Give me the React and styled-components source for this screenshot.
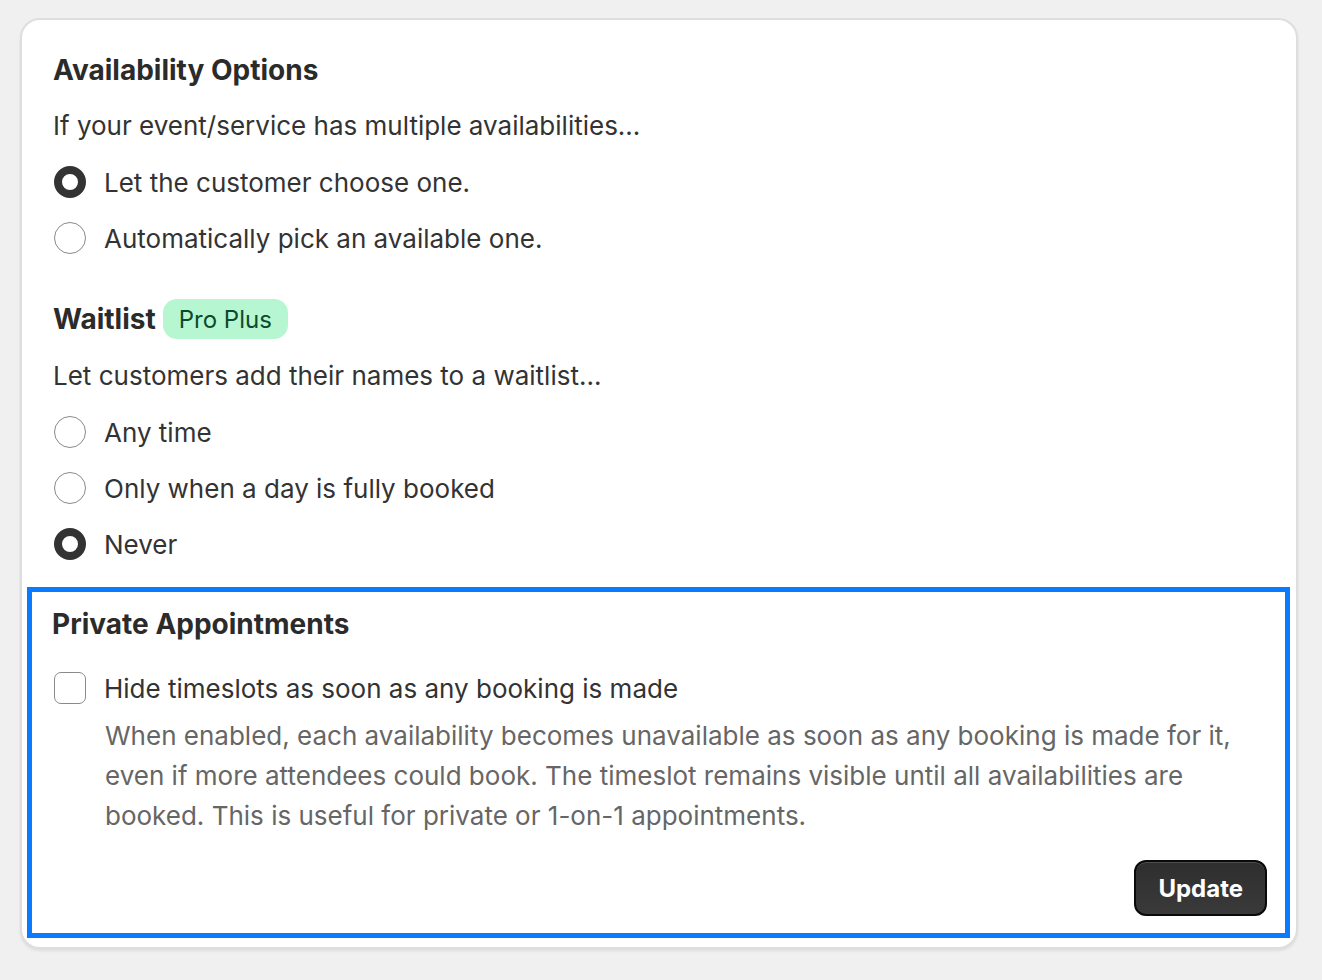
import React, { useState } from "react";
import styled, { createGlobalStyle } from "styled-components";

const GlobalStyle = createGlobalStyle`
  html, body {
    margin: 0;
    padding: 0;
    background: #f0f0f0;
    font-family: Inter, "Noto Sans", sans-serif;
    color: #333;
  }
`;

const Page = styled.div`
  padding: 18px 24px 34px 20px;
`;

const Card = styled.div`
  background: #fff;
  border: 2px solid #dedede;
  border-radius: 20px;
  box-shadow: 0 2px 3px rgba(0, 0, 0, 0.08);
  padding: 0 6px 9px 5px;
`;

const Section = styled.div`
  padding: ${(p) => p.$pad || "0 26px"};
`;

const Highlight = styled.div`
  border: 5px solid #0a7bff;
  padding: 12px 18px 17px 20px;
`;

const Heading = styled.h2`
  margin: 0;
  display: flex;
  align-items: center;
  gap: 7px;
  font-size: 28px;
  font-weight: 700;
  color: #2b2b2b;
  height: 40px;
`;

const Badge = styled.span`
  display: inline-flex;
  align-items: center;
  height: 40px;
  padding: 0 16px;
  border-radius: 14px;
  background: #b6f7d2;
  color: #0d4a2b;
  font-size: 24px;
  font-weight: 400;
`;

const Text = styled.p`
  margin: ${(p) => p.$margin || "0"};
  font-size: 26px;
  line-height: 40px;
  color: ${(p) => (p.$muted ? "#666" : "#333")};
`;

const OptionList = styled.div`
  display: flex;
  flex-direction: column;
  gap: 16px;
  margin-top: ${(p) => p.$top || "16px"};
`;

const Option = styled.label`
  display: flex;
  align-items: center;
  gap: 18px;
  height: 40px;
  font-size: 26px;
  color: #333;
  cursor: pointer;
`;

const Radio = styled.span`
  box-sizing: border-box;
  width: 32px;
  height: 32px;
  border-radius: 50%;
  margin-left: 1px;
  border: ${(p) => (p.$checked ? "8px solid #333" : "1.5px solid #8a8a8a")};
  background: #fff;
  flex-shrink: 0;
`;

const Checkbox = styled.span`
  box-sizing: border-box;
  width: 32px;
  height: 32px;
  border-radius: 7px;
  margin-left: 2px;
  border: 1.5px solid #8a8a8a;
  background: #fff;
  flex-shrink: 0;
`;

const Description = styled.div`
  padding-left: 53px;
  margin-top: 8px;
`;

const Footer = styled.div`
  display: flex;
  justify-content: flex-end;
  margin-top: 24px;
`;

const Button = styled.button`
  height: 56px;
  padding: 0 22px;
  border-radius: 12px;
  border: 2px solid #0a0a0a;
  background: linear-gradient(#2e2e2e, #3a3a3a);
  box-shadow: inset 0 1px 0 rgba(255, 255, 255, 0.15);
  color: #fff;
  font-family: Inter, "Noto Sans", sans-serif;
  font-size: 24px;
  font-weight: 700;
  cursor: pointer;
`;

const RadioGroup = ({ options, value, onChange }) => (
  <OptionList>
    {options.map((o) => (
      <Option key={o} onClick={() => onChange(o)}>
        <Radio $checked={value === o} />
        {o}
      </Option>
    ))}
  </OptionList>
);

export default function App() {
  const [pick, setPick] = useState("Let the customer choose one.");
  const [wait, setWait] = useState("Never");
  const [hide, setHide] = useState(false);

  return (
    <Page>
      <GlobalStyle />
      <Card>
        <Section $pad="30px 26px 0">
          <Heading>Availability Options</Heading>
          <Text $margin="16px 0 0">If your event/service has multiple availabilities...</Text>
          <RadioGroup
            options={["Let the customer choose one.", "Automatically pick an available one."]}
            value={pick}
            onChange={setPick}
          />
        </Section>
        <Section $pad="41px 26px 23px">
          <Heading>
            Waitlist <Badge>Pro Plus</Badge>
          </Heading>
          <Text $margin="17px 0 0">Let customers add their names to a waitlist...</Text>
          <RadioGroup
            options={["Any time", "Only when a day is fully booked", "Never"]}
            value={wait}
            onChange={setWait}
          />
        </Section>
        <Highlight>
          <Heading>Private Appointments</Heading>
          <OptionList $top="24px">
            <Option onClick={() => setHide(!hide)}>
              <Checkbox />
              Hide timeslots as soon as any booking is made
            </Option>
          </OptionList>
          <Description>
            <Text $muted>
              When enabled, each availability becomes unavailable as soon as any booking is made for it,
              even if more attendees could book. The timeslot remains visible until all availabilities are
              booked. This is useful for private or 1-on-1 appointments.
            </Text>
          </Description>
          <Footer>
            <Button>Update</Button>
          </Footer>
        </Highlight>
      </Card>
    </Page>
  );
}
